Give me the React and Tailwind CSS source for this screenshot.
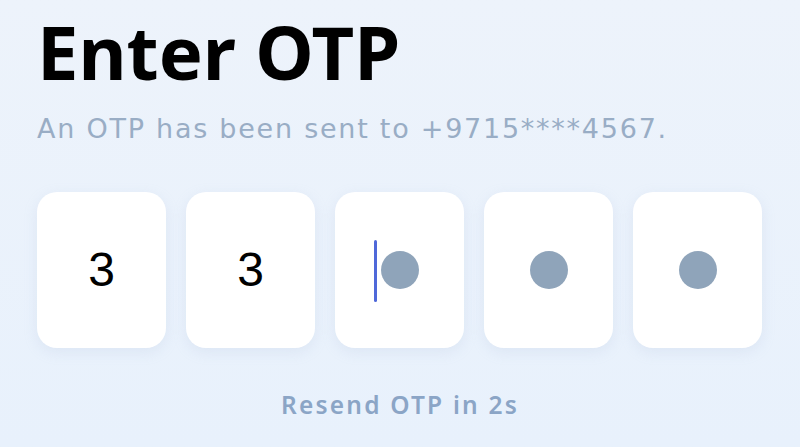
import React from "react";

const digits = ["3", "3", "", "", ""];

export default function App() {
  return (
    <div
      className="h-[447px] w-[800px] overflow-hidden bg-gradient-to-b from-[#edf3fb] to-[#e8f1fc] pl-[37px] pt-[12px]"
      style={{ fontFamily: '"Noto Sans", sans-serif' }}
    >
      <h1 className="text-[74px] font-bold leading-[80px] text-black">
        Enter OTP
      </h1>
      <p
        className="mt-[20px] text-[27px] font-normal leading-[34px] tracking-[1.75px] text-[#99adc5]"
        style={{ fontFamily: '"DejaVu Sans", sans-serif' }}
      >
        An OTP has been sent to +9715****4567.
      </p>

      <div className="mt-[46px] flex gap-[20px]">
        {digits.map((d, i) => (
          <div
            key={i}
            className="relative flex h-[156px] w-[129px] items-center justify-center rounded-[20px] bg-white shadow-[0_4px_14px_rgba(160,180,210,0.18)]"
          >
            {d ? (
              <span
                className="text-[48px] leading-none text-black"
                style={{ fontFamily: '"Liberation Sans", sans-serif' }}
              >
                {d}
              </span>
            ) : (
              <span className="h-[38px] w-[38px] rounded-full bg-[#8fa4ba]" />
            )}
            {i === 2 && (
              <span className="absolute left-[39px] top-[48px] h-[62px] w-[3px] rounded-full bg-[#4f68d9]" />
            )}
          </div>
        ))}
      </div>

      <p className="mt-[42px] -ml-[37px] text-center text-[24.5px] font-semibold leading-[30px] tracking-[2.2px] text-[#8ba5c6]">
        Resend OTP in 2s
      </p>
    </div>
  );
}
